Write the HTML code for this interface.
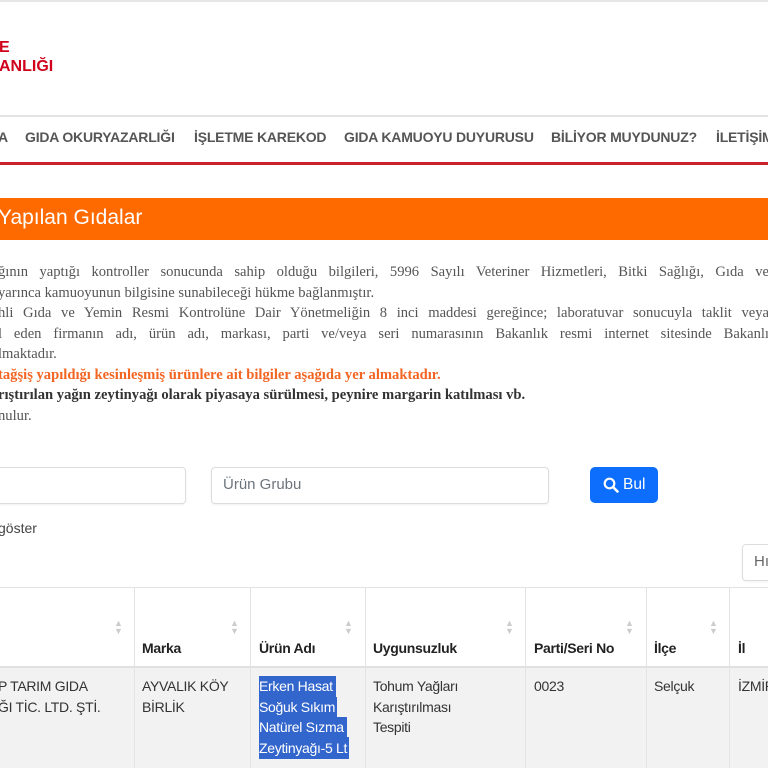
<!DOCTYPE html>
<html><head><meta charset="utf-8"><style>
*{margin:0;padding:0;box-sizing:border-box}
body{width:768px;height:768px;overflow:hidden;background:#fff;position:relative;font-family:"Liberation Sans",sans-serif}
.a{position:absolute;white-space:nowrap}
.logo{color:#d0021b;font-weight:bold;font-size:16px}
.nav{top:129px;font-size:14px;font-weight:bold;color:#555;letter-spacing:-0.2px}
.p{left:-2px;font-family:"Liberation Serif",serif;font-size:14.6px;color:#555}
.j{width:771px;text-align:justify;text-align-last:justify}
.inp{border:1px solid #ddd;border-radius:4px;box-shadow:0 1px 2px rgba(0,0,0,.06);background:#fff}
.th{top:640px;font-size:14px;font-weight:bold;color:#222;letter-spacing:-0.3px}
.td{font-size:14px;color:#333;line-height:20.5px;letter-spacing:-0.3px}
.vl{position:absolute;top:588px;height:180px;width:1px;background:#e3e3e3}
.sort{position:absolute;top:619px;font-size:9px;color:#ccc;line-height:8px}
</style></head><body>
<div class="a" style="left:0;top:0;width:768px;height:2px;background:#e6e6e6"></div>
<div class="a logo" style="left:-1px;top:39px">E</div>
<div class="a logo" style="left:-1px;top:58px">ANLIĞI</div>
<div class="a" style="left:0;top:115px;width:768px;height:2px;background:#e4e4e4"></div>
<div class="a nav" style="left:-2px">A</div>
<div class="a nav" style="left:25px">GIDA OKURYAZARLIĞI</div>
<div class="a nav" style="left:194px">İŞLETME KAREKOD</div>
<div class="a nav" style="left:344px">GIDA KAMUOYU DUYURUSU</div>
<div class="a nav" style="left:551px">BİLİYOR MUYDUNUZ?</div>
<div class="a nav" style="left:716px">İLETİŞİM</div>
<div class="a" style="left:0;top:162px;width:768px;height:3px;background:#c9222a"></div>
<div class="a" style="left:0;top:198px;width:768px;height:42px;background:#ff6a00"></div>
<div class="a" style="left:-2px;top:206px;color:#fff;font-size:21px">Yapılan Gıdalar</div>
<div class="a p j" style="top:264px">ğının yaptığı kontroller sonucunda sahip olduğu bilgileri, 5996 Sayılı Veteriner Hizmetleri, Bitki Sağlığı, Gıda ve</div>
<div class="a p" style="top:285px">yarınca kamuoyunun bilgisine sunabileceği hükme bağlanmıştır.</div>
<div class="a p j" style="top:305px">hli Gıda ve Yemin Resmi Kontrolüne Dair Yönetmeliğin 8 inci maddesi gereğince; laboratuvar sonucuyla taklit veya</div>
<div class="a p j" style="top:326px">l eden firmanın adı, ürün adı, markası, parti ve/veya seri numarasının Bakanlık resmi internet sitesinde Bakanlı</div>
<div class="a p" style="top:346px">lmaktadır.</div>
<div class="a p" style="top:367px;color:#f26522;font-weight:bold">tağşiş yapıldığı kesinleşmiş ürünlere ait bilgiler aşağıda yer almaktadır.</div>
<div class="a p" style="top:387px;color:#333;font-weight:bold">rıştırılan yağın zeytinyağı olarak piyasaya sürülmesi, peynire margarin katılması vb.</div>
<div class="a p" style="top:408px">nulur.</div>
<div class="a inp" style="left:-10px;top:467px;width:196px;height:37px"></div>
<div class="a inp" style="left:211px;top:467px;width:338px;height:37px"></div>
<div class="a" style="left:223px;top:476px;font-size:15px;color:#6c757d">Ürün Grubu</div>
<div class="a" style="left:590px;top:467px;width:68px;height:36px;background:#0d6efd;border-radius:5px;color:#fff;font-size:15.5px">
<svg style="position:absolute;left:13px;top:10px" width="16" height="16" viewBox="0 0 16 16"><circle cx="6.5" cy="6.5" r="4.8" fill="none" stroke="#fff" stroke-width="2.2"/><path d="M10 10l4.5 4.5" stroke="#fff" stroke-width="2.6" stroke-linecap="round"/></svg>
<span style="position:absolute;left:33px;top:9px">Bul</span></div>
<div class="a" style="left:-2px;top:520px;font-size:14px;color:#444">göster</div>
<div class="a inp" style="left:742px;top:544px;width:60px;height:37px"></div>
<div class="a" style="left:754px;top:553px;font-size:15px;color:#666">Hı</div>
<div class="a" style="left:0;top:587px;width:768px;height:1px;background:#e3e3e3"></div>
<div class="a" style="left:0;top:667px;width:768px;height:101px;background:#f2f2f2"></div>
<div class="a" style="left:0;top:666px;width:768px;height:2px;background:#e0e0e0"></div>
<div class="vl" style="left:134px"></div><div class="vl" style="left:250px"></div><div class="vl" style="left:365px"></div><div class="vl" style="left:525px"></div><div class="vl" style="left:646px"></div><div class="vl" style="left:729px"></div>
<div class="sort" style="left:114px">▲<br>▼</div><div class="sort" style="left:230px">▲<br>▼</div><div class="sort" style="left:344px">▲<br>▼</div><div class="sort" style="left:505px">▲<br>▼</div><div class="sort" style="left:625px">▲<br>▼</div><div class="sort" style="left:709px">▲<br>▼</div>
<div class="a th" style="left:142px">Marka</div>
<div class="a th" style="left:259px">Ürün Adı</div>
<div class="a th" style="left:373px">Uygunsuzluk</div>
<div class="a th" style="left:534px">Parti/Seri No</div>
<div class="a th" style="left:654px">İlçe</div>
<div class="a th" style="left:738px">İl</div>
<div class="a td" style="left:-2px;top:676px">P TARIM GIDA<br>ĞI TİC. LTD. ŞTİ.</div>
<div class="a td" style="left:142px;top:676px">AYVALIK KÖY<br>BİRLİK</div>
<div class="a" style="left:259px;top:676px;width:77px;height:21px;background:#3366cc"></div>
<div class="a" style="left:259px;top:697px;width:78px;height:20px;background:#3366cc"></div>
<div class="a" style="left:259px;top:717px;width:88px;height:20px;background:#3366cc"></div>
<div class="a" style="left:259px;top:737px;width:90px;height:22px;background:#3366cc"></div>
<div class="a td" style="left:259px;top:676px;color:#fff">Erken Hasat<br>Soğuk Sıkım<br>Natürel Sızma<br>Zeytinyağı-5 Lt</div>
<div class="a td" style="left:373px;top:676px">Tohum Yağları<br>Karıştırılması<br>Tespiti</div>
<div class="a td" style="left:534px;top:676px">0023</div>
<div class="a td" style="left:654px;top:676px">Selçuk</div>
<div class="a td" style="left:738px;top:676px">İZMİR</div>
</body></html>
